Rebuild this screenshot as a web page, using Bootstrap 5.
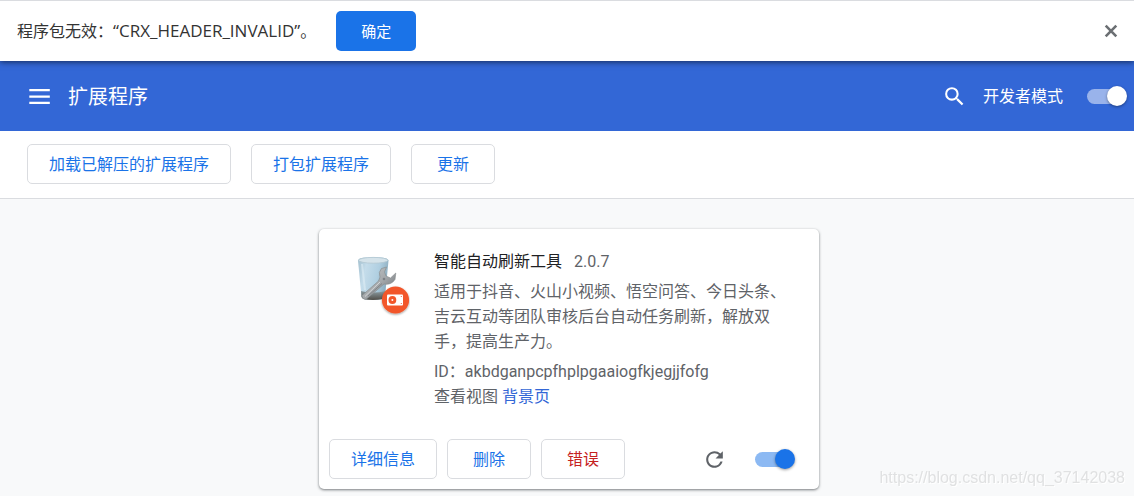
<!DOCTYPE html>
<html lang="zh-CN">
<head>
<meta charset="utf-8">
<meta name="viewport" content="width=device-width, initial-scale=1">
<title>扩展程序</title>
<link rel="stylesheet" href="https://cdn.jsdelivr.net/npm/bootstrap@5.3.0/dist/css/bootstrap.min.css">
<style>
  body { background: #f8f9fa; color: #5f6368; font: 16px/25px Roboto, "Noto Sans CJK SC", sans-serif; }
  .infobar { min-height: 61px; border-top: 1px solid #dadce0; padding: 0 11px 0 17px; gap: 20px; color: #333; font-family: "Open Sans", "Noto Sans CJK SC", sans-serif; box-shadow: 0 1px 6px rgba(0,0,0,.6); z-index: 1; }
  .infobar .btn { width: 80px; height: 40px; border: 0; border-radius: 5px; font-size: 15px; background: #1a73e8; }
  .code { font-size: 17px; }
  .bare { padding: 0; border: 0; background: none; color: inherit; display: flex; }
  .topbar { min-height: 70px; background: #3367d6; padding: 0 7px 0 27px; }
  .topbar h1 { font-size: 20px; line-height: 30px; font-weight: 400; padding-top: 2px; }
  .tools { padding: 13px 27px 14px; gap: 20px; border-bottom: 1px solid #dadce0; }
  .act { height: 40px; padding: 0 21px; border: 1px solid #dadce0; border-radius: 5px; color: #1a73e8; line-height: 25px; background: #fff; }
  .act:hover { color: #1a73e8; background: #f4f8fe; border-color: #d2e3fc; }
  .act-wide { min-width: 84px; }
  .act-err, .act-err:hover { color: #c5221f; }
  .page-main { padding: 30px 16px 7px 20px; }
  .ext { max-width: 500px; min-height: 260px; border-radius: 5px; box-shadow: 0 1px 3px rgba(60,64,67,.5), 0 1px 2px rgba(60,64,67,.25); }
  .ext-body { padding: 20px 20px 20px 35px; gap: 24px; }
  .ext-title { gap: 12px; margin-bottom: 5px; }
  .ext h2 { font-size: 16px; line-height: 25px; font-weight: 400; color: #202124; }
  .ext p { margin-bottom: 5px; }
  .ext-foot { padding: 0 24px 10px 10px; gap: 10px; }
  .ext-side { gap: 28px; }
  .ext a { color: #3367d6; text-decoration: none; }
  .toggle { appearance: none; position: relative; width: 40px; height: 20px; margin: 0; color: #1a73e8; cursor: pointer; }
  .toggle::before { content: ""; position: absolute; left: 0; top: 3px; width: 35px; height: 15px; border-radius: 8px; background: currentColor; opacity: .5; }
  .toggle::after { content: ""; position: absolute; right: 0; top: 0; width: 20px; height: 20px; border-radius: 50%; background: currentColor; box-shadow: 0 1px 3px rgba(0,0,0,.4); }
  .toggle:not(:checked)::after { right: 20px; }
  .toggle-light { color: #fff; }
  .wmark { right: 9px; bottom: 6px; font: 16px/24px "Liberation Sans", sans-serif; color: #e0e1e2; text-shadow: 1px 1px 0 #fff; }
</style>
<script src="https://cdn.jsdelivr.net/npm/bootstrap@5.3.0/dist/js/bootstrap.bundle.min.js"></script>
</head>
<body>
<div class="infobar d-flex align-items-center bg-white position-relative">
  <span>程序包无效：<span class="code">“CRX_HEADER_INVALID”</span>。</span>
  <button type="button" class="btn btn-primary">确定</button>
  <button type="button" class="bare ms-auto" aria-label="关闭">
    <svg width="24" height="24" viewBox="0 0 24 24" stroke="#6b6f73" stroke-width="2.600"><path d="M6.700 6.700l10.600 10.600M17.300 6.700L6.700 17.300"/></svg>
  </button>
</div>
<header class="topbar d-flex align-items-center text-white">
  <button type="button" class="bare" aria-label="主菜单">
    <svg width="25" height="25" viewBox="0 0 25 25" fill="currentColor"><path d="M2.300 5h20.500v2.300H2.300zM2.300 11.400h20.500v2.300H2.300zM2.300 17.800h20.500v2.300H2.300z"/></svg>
  </button>
  <h1 class="mb-0 ms-3">扩展程序</h1>
  <button type="button" class="bare ms-auto" aria-label="搜索">
    <svg width="25" height="25" viewBox="0 0 24 24" fill="currentColor"><path d="M15.500 14h-.79l-.28-.27A6.471 6.471 0 0 0 16 9.500 6.500 6.500 0 1 0 9.500 16c1.610 0 3.090-.59 4.230-1.570l.27.28v.79l5 4.990L20.490 19l-4.990-5zm-6 0C7.010 14 5 11.990 5 9.500S7.010 5 9.500 5 14 7.010 14 9.500 11.990 14 9.500 14z"/></svg>
  </button>
  <label class="ms-3 me-4" for="dev">开发者模式</label>
  <input id="dev" class="toggle toggle-light" type="checkbox" role="switch" checked>
</header>
<div class="tools d-flex flex-wrap bg-white">
  <button type="button" class="btn act">加载已解压的扩展程序</button>
  <button type="button" class="btn act">打包扩展程序</button>
  <button type="button" class="btn act act-wide">更新</button>
</div>
<main class="page-main">
  <section class="ext bg-white mx-auto d-flex flex-column">
    <div class="ext-body d-flex flex-grow-1">
      <svg class="flex-shrink-0" width="56" height="70" viewBox="14 9 56 70" role="img" aria-label="智能自动刷新工具">
        <defs>
          <linearGradient id="glass" x1="0" x2="1" y1="0" y2=".3"><stop offset="0" stop-color="#a2bfce"/><stop offset=".3" stop-color="#c4dcea"/><stop offset=".7" stop-color="#b0cfe1"/><stop offset="1" stop-color="#8fafc1"/></linearGradient>
          <linearGradient id="base" x1="0" x2="0" y1="0" y2="1"><stop offset="0" stop-color="#8b9ba1"/><stop offset="1" stop-color="#514e48"/></linearGradient>
          <linearGradient id="steel" x1="0" x2="1" y1="0" y2="1"><stop offset="0" stop-color="#c7cacc"/><stop offset=".5" stop-color="#a5a9ac"/><stop offset="1" stop-color="#63686c"/></linearGradient>
          <filter id="drop" x="-30%" y="-30%" width="160%" height="160%"><feDropShadow dx="0" dy="1" stdDeviation="1.200" flood-opacity=".4"/></filter>
        </defs>
        <path d="M18 20.500Q18 17 33 17T48.500 20.500L45 57Q44 60 33 60T21.500 57Z" fill="url(#glass)"/>
        <path d="M21 51Q33 54 45.500 51L45 57Q44 60 33 60T21.500 57Z" fill="url(#base)"/>
        <ellipse cx="33.300" cy="20.300" rx="14.600" ry="2.900" fill="#d5e3ea" stroke="#b4c8d2" stroke-width=".8"/>
        <path d="M22 24L25 50" stroke="#deedf5" stroke-width="2" opacity=".6"/>
        <path d="M46.500 27L41.500 28.500Q38 32 40 37L38.500 41 22 55.500Q22 59.500 26 59.500L44 44Q51 45.500 55 39.500L55.800 33 50.500 38 46 36 44.500 32Z" fill="url(#steel)" stroke="#85898c" stroke-width=".6"/>
        <path d="M25 56.500L40 42" stroke="#d4d6d8" stroke-width="1"/>
        <path d="M28 56L42 43.500" stroke="#777c80" stroke-width=".8"/>
        <circle cx="44" cy="39" r="1.300" fill="#7d8286"/>
        <circle cx="55.500" cy="60" r="13.600" fill="#f2572b" filter="url(#drop)"/>
        <rect x="47" y="54.500" width="16" height="11" rx="1" fill="#fff"/>
        <circle cx="52.400" cy="60" r="3.900" fill="#f2572b"/><circle cx="52.400" cy="60" r="1" fill="#fff"/>
        <circle cx="61.300" cy="56.500" r=".6" fill="#f2572b"/><circle cx="61.300" cy="63.500" r=".6" fill="#f2572b"/>
      </svg>
      <div>
        <div class="ext-title d-flex"><h2 class="mb-0">智能自动刷新工具</h2><span>2.0.7</span></div>
        <p>适用于抖音、火山小视频、悟空问答、今日头条、吉云互动等团队审核后台自动任务刷新，解放双手，提高生产力。</p>
        <div>ID：akbdganpcpfhplpgaaiogfkjegjjfofg</div>
        <div>查看视图 <a href="#">背景页</a></div>
      </div>
    </div>
    <div class="ext-foot d-flex align-items-center">
      <button type="button" class="btn act">详细信息</button>
      <button type="button" class="btn act act-wide">删除</button>
      <button type="button" class="btn act act-wide act-err">错误</button>
      <div class="ext-side d-flex align-items-center ms-auto">
        <button type="button" class="bare" aria-label="重新加载">
          <svg width="25" height="25" viewBox="0 0 24 24" fill="#5f6368"><path d="M17.650 6.350A7.958 7.958 0 0 0 12 4c-4.420 0-7.990 3.580-7.990 8s3.570 8 7.990 8c3.730 0 6.840-2.550 7.730-6h-2.080A5.990 5.990 0 0 1 12 18c-3.310 0-6-2.690-6-6s2.690-6 6-6c1.660 0 3.140.69 4.220 1.780L13 11h7V4l-2.350 2.350z"/></svg>
        </button>
        <input class="toggle" type="checkbox" role="switch" aria-label="启用" checked>
      </div>
    </div>
  </section>
</main>
<div class="wmark position-fixed">https://blog.csdn.net/qq_37142038</div>
</body>
</html>
